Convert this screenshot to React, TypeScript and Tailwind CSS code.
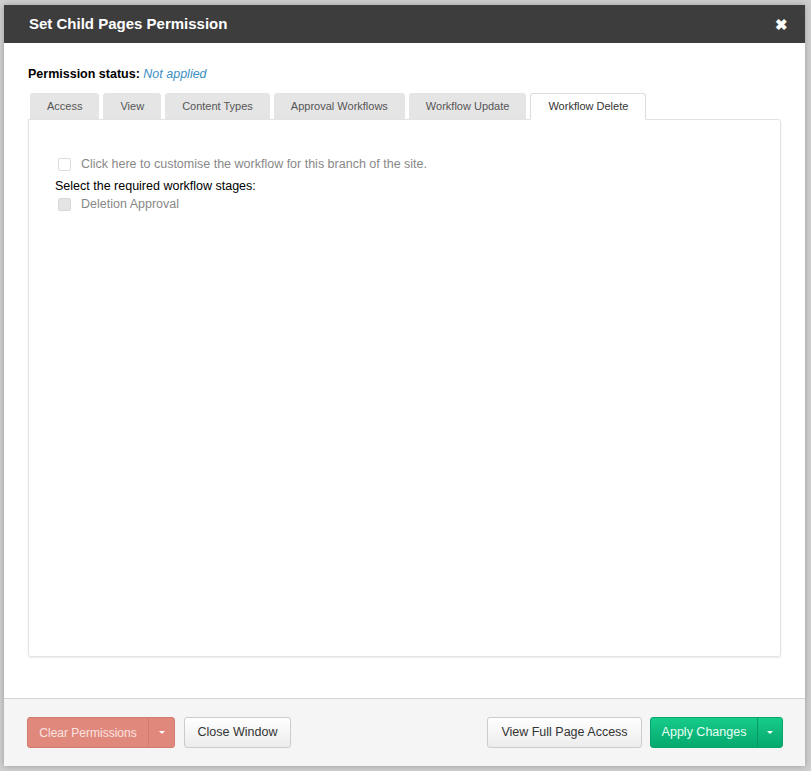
import React from "react";

const tabs = [
  "Access",
  "View",
  "Content Types",
  "Approval Workflows",
  "Workflow Update",
  "Workflow Delete",
];

function Caret() {
  return (
    <span className="inline-block w-0 h-0 border-l-[3px] border-r-[3px] border-t-[3px] border-l-transparent border-r-transparent border-t-white" />
  );
}

export default function App() {
  const active = "Workflow Delete";

  return (
    <div
      className="w-[811px] h-[771px] bg-[#cfcfcf] pt-[5px] pl-[4px]"
      style={{ fontFamily: '"Liberation Sans", Arial, sans-serif' }}
    >
      <div className="w-[801px] h-[761px] bg-white flex flex-col shadow-[0_0_6px_rgba(0,0,0,0.25)]">
        {/* Header */}
        <div className="h-[38px] bg-[#3d3d3d] flex items-center justify-between pl-[25px] pr-[17px]">
          <h2 className="text-white text-[15px] font-bold">
            Set Child Pages Permission
          </h2>
          <span className="text-white text-[15px] font-bold leading-none">✖</span>
        </div>

        {/* Body */}
        <div className="flex-1 flex flex-col px-[24px] pt-[23px] pb-[41px]">
          <div className="text-[12.5px] text-black leading-[16px]">
            <span className="font-bold">Permission status:</span>{" "}
            <span className="italic text-[#3a8fc4]">Not applied</span>
          </div>

          <div className="flex gap-[4px] mt-[11px] pl-[2px] h-[26px]">
            {tabs.map((t) =>
              t === active ? (
                <div
                  key={t}
                  className="px-[17px] flex items-center text-[11px] text-[#333] bg-white border border-[#ddd] border-b-white rounded-t-[3px] relative z-10 -mb-px"
                >
                  {t}
                </div>
              ) : (
                <div
                  key={t}
                  className="px-[17px] flex items-center text-[11px] text-[#555] bg-[#e5e5e5] rounded-t-[3px]"
                >
                  {t}
                </div>
              )
            )}
          </div>

          <div className="flex-1 border border-[#e3e3e3] rounded-b-[3px] rounded-tr-[3px] shadow-[0_1px_2px_rgba(0,0,0,0.08)] px-[26px] pt-[36px]">
            <label className="flex items-center gap-[10px] text-[12.5px] leading-[16px] text-[#888] pl-[3px]">
              <span className="w-[13px] h-[13px] border border-[#dcdcdc] rounded-[2px] bg-white" />
              Click here to customise the workflow for this branch of the site.
            </label>
            <div className="text-[12.5px] leading-[16px] text-black mt-[6px]">
              Select the required workflow stages:
            </div>
            <label className="flex items-center gap-[10px] text-[12.5px] leading-[16px] text-[#888] pl-[3px] mt-[2px]">
              <span className="w-[13px] h-[13px] border border-[#d8d8d8] rounded-[2px] bg-[#e4e4e4]" />
              Deletion Approval
            </label>
          </div>
        </div>

        {/* Footer */}
        <div className="h-[68px] bg-[#f5f5f5] border-t border-[#d4d4d4] flex items-center justify-between pl-[23px] pr-[22px]">
          <div className="flex gap-[9px]">
            <div className="flex h-[31px] rounded-[3px] overflow-hidden bg-[#e0887c] border border-[#d27c70]">
              <button className="w-[120px] text-[12px] text-[#fbe4e0]">
                Clear Permissions
              </button>
              <button className="w-[26px] flex items-center justify-center border-l border-[#cf7a6e]">
                <Caret />
              </button>
            </div>
            <button className="h-[31px] w-[107px] text-[12.5px] text-[#333] rounded-[3px] border border-[#ccc] bg-gradient-to-b from-white to-[#ececec]">
              Close Window
            </button>
          </div>
          <div className="flex gap-[8px]">
            <button className="h-[31px] w-[155px] text-[12.5px] text-[#333] rounded-[3px] border border-[#ccc] bg-gradient-to-b from-white to-[#ececec]">
              View Full Page Access
            </button>
            <div className="flex h-[31px] rounded-[3px] overflow-hidden bg-gradient-to-b from-[#16cc8a] to-[#05a86e] border border-[#08a46c]">
              <button className="w-[106px] text-[12.5px] text-[#eafff5]">
                Apply Changes
              </button>
              <button className="w-[25px] flex items-center justify-center border-l border-[#089a66]">
                <Caret />
              </button>
            </div>
          </div>
        </div>
      </div>
    </div>
  );
}
